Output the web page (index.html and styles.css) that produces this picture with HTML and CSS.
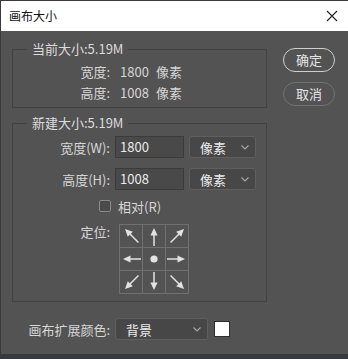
FILE: index.html
```html
<!DOCTYPE html>
<html lang="zh-CN">
<head>
<meta charset="utf-8">
<title>画布大小</title>
<link rel="stylesheet" href="styles.css">
</head>
<body>
<div class="window">
  <div class="titlebar">
    <span class="title">画布大小</span>
    <svg class="close" width="12" height="12" viewBox="0 0 12 12"><path d="M1 1 L11 11 M11 1 L1 11" stroke="#222" stroke-width="1.1" fill="none"/></svg>
  </div>
  <div class="content">
    <div class="main">
      <fieldset class="group current">
        <legend>当前大小:5.19M</legend>
        <div class="info-row"><span class="label">宽度:</span><span class="value">1800</span><span class="unit">像素</span></div>
        <div class="info-row"><span class="label">高度:</span><span class="value">1008</span><span class="unit">像素</span></div>
      </fieldset>
      <fieldset class="group newsize">
        <legend>新建大小:5.19M</legend>
        <div class="field-row"><span class="label">宽度(W):</span><div class="input">1800</div><div class="select"><span>像素</span><svg class="chev" width="8" height="5" viewBox="0 0 8 5"><path d="M0.5 0.5 L4 4 L7.5 0.5" stroke="#a8a8a8" stroke-width="1.1" fill="none"/></svg></div></div>
        <div class="field-row second"><span class="label">高度(H):</span><div class="input">1008</div><div class="select"><span>像素</span><svg class="chev" width="8" height="5" viewBox="0 0 8 5"><path d="M0.5 0.5 L4 4 L7.5 0.5" stroke="#a8a8a8" stroke-width="1.1" fill="none"/></svg></div></div>
        <div class="check-row"><span class="box"></span><span class="check-label">相对(R)</span></div>
        <div class="anchor-row">
          <span class="label">定位:</span>
          <svg class="anchor" width="70" height="70" viewBox="0 0 70 70">
            <defs>
              <g id="arr"><path d="M0 0 L3.6 7.5 L-3.6 7.5 Z" fill="#e2e2e2"/><path d="M0 6 L0 18" stroke="#e2e2e2" stroke-width="1.5"/></g>
              <g id="arrd"><path d="M0 0 L3.6 7.5 L-3.6 7.5 Z" fill="#e2e2e2"/><path d="M0 6 L0 19" stroke="#e2e2e2" stroke-width="1.5"/></g>
            </defs>
            <path d="M0.5 0.5 H69.5 V69.5 H0.5 Z M23.5 0.5 V69.5 M46.5 0.5 V69.5 M0.5 23.5 H69.5 M0.5 46.5 H69.5" stroke="#707070" stroke-width="1" fill="none"/>
            <use href="#arr" transform="translate(35,4)"/>
            <use href="#arr" transform="translate(35,66) rotate(180)"/>
            <use href="#arr" transform="translate(4,35) rotate(-90)"/>
            <use href="#arr" transform="translate(66,35) rotate(90)"/>
            <use href="#arrd" transform="translate(6,5) rotate(-45)"/>
            <use href="#arrd" transform="translate(65,5) rotate(45)"/>
            <use href="#arrd" transform="translate(6,65) rotate(-135)"/>
            <use href="#arrd" transform="translate(65,65) rotate(135)"/>
            <circle cx="35" cy="35" r="3.6" fill="#e2e2e2"/>
          </svg>
        </div>
      </fieldset>
      <div class="field-row ext"><span class="label">画布扩展颜色:</span><div class="select wide"><span>背景</span><svg class="chev" width="8" height="5" viewBox="0 0 8 5"><path d="M0.5 0.5 L4 4 L7.5 0.5" stroke="#a8a8a8" stroke-width="1.1" fill="none"/></svg></div><span class="swatch"></span></div>
    </div>
    <div class="side">
      <button class="btn primary">确定</button>
      <button class="btn">取消</button>
    </div>
  </div>
</div>
</body>
</html>
```
FILE: styles.css
```css
html, body {
  margin: 0;
  padding: 0;
  background: #363b3f;
}
body {
  width: 348px;
  height: 359px;
  overflow: hidden;
  font-family: "Noto Sans CJK SC", "Noto Sans", sans-serif;
  font-size: 13px;
}
.window {
  width: 347px;
  height: 353px;
  background: #535353;
  border-top: 1px solid #3a3a3a;
  border-left: 1px solid #3a3a3a;
  border-bottom: 1px solid #3a3a3a;
}
.titlebar {
  height: 30px;
  background: #ffffff;
  display: flex;
  align-items: center;
  justify-content: space-between;
  padding: 0 10px 0 8px;
}
.title {
  font-size: 12px;
  color: #111;
  line-height: 16px;
}
.close {
  display: block;
  margin-top: 0;
}
.content {
  display: flex;
  padding: 9px 0 0 11px;
}
.main {
  width: 255px;
}
.group {
  margin: 0;
  padding: 0;
  border: 1px solid #424242;
  min-width: 0;
}
.group legend {
  margin-left: 14px;
  padding: 0 5px;
  line-height: 18px;
  color: #dcdcdc;
}
.current {
  padding: 3px 0 4px;
}
.info-row {
  display: flex;
  height: 21px;
  align-items: center;
  color: #d6d6d6;
}
.label {
  width: 97px;
  text-align: right;
  color: #d6d6d6;
  flex: none;
}
.value {
  margin-left: 10px;
}
.unit {
  margin-left: 7px;
}
.newsize {
  margin-top: 6px;
  padding: 4px 0 7px;
}
.field-row {
  display: flex;
  align-items: center;
  height: 22px;
}
.field-row.second {
  margin-top: 10px;
}
.input {
  margin-left: 5px;
  width: 69px;
  height: 22px;
  box-sizing: border-box;
  background: #494949;
  border: 1px solid #3b3b3b;
  color: #eaeaea;
  padding-left: 4px;
  line-height: 20px;
}
.select {
  margin-left: 5px;
  width: 67px;
  height: 22px;
  box-sizing: border-box;
  background: #474747;
  border: 1px solid #5f5f5f;
  border-radius: 3px;
  display: flex;
  align-items: center;
  justify-content: space-between;
  padding: 0 6px 0 10px;
  color: #ececec;
}
.chev {
  display: block;
}
.check-row {
  margin-top: 6px;
  height: 20px;
  display: flex;
  align-items: center;
  padding-left: 86px;
}
.box {
  width: 12px;
  height: 12px;
  box-sizing: border-box;
  border: 1px solid #8a8a8a;
  border-radius: 2px;
  background: #4a4a4a;
}
.check-label {
  margin-left: 7px;
  color: #d6d6d6;
}
.anchor-row {
  margin-top: 8px;
  display: flex;
  align-items: flex-start;
}
.anchor-row .label {
  line-height: 18px;
  margin-top: -1px;
}
.anchor {
  display: block;
  margin-left: 9px;
}
.ext {
  margin-top: 16px;
}
.ext .label {
  width: 98px;
}
.select.wide {
  width: 93px;
  padding-left: 10px;
}
.swatch {
  margin-left: 6px;
  width: 16px;
  height: 16px;
  box-sizing: border-box;
  background: #ffffff;
  border: 1px solid #2e2e2e;
}
.side {
  margin-left: 16px;
  padding-top: 8px;
  display: flex;
  flex-direction: column;
  gap: 10px;
}
.btn {
  width: 52px;
  height: 24px;
  margin: 0;
  padding: 0;
  border-radius: 12px;
  background: transparent;
  border: 1.5px solid #727272;
  color: #e6e6e6;
  font-family: "Noto Sans CJK SC", "Noto Sans", sans-serif;
  font-size: 13px;
  line-height: 20px;
}
.btn.primary {
  border-color: #cfcfcf;
}
```
